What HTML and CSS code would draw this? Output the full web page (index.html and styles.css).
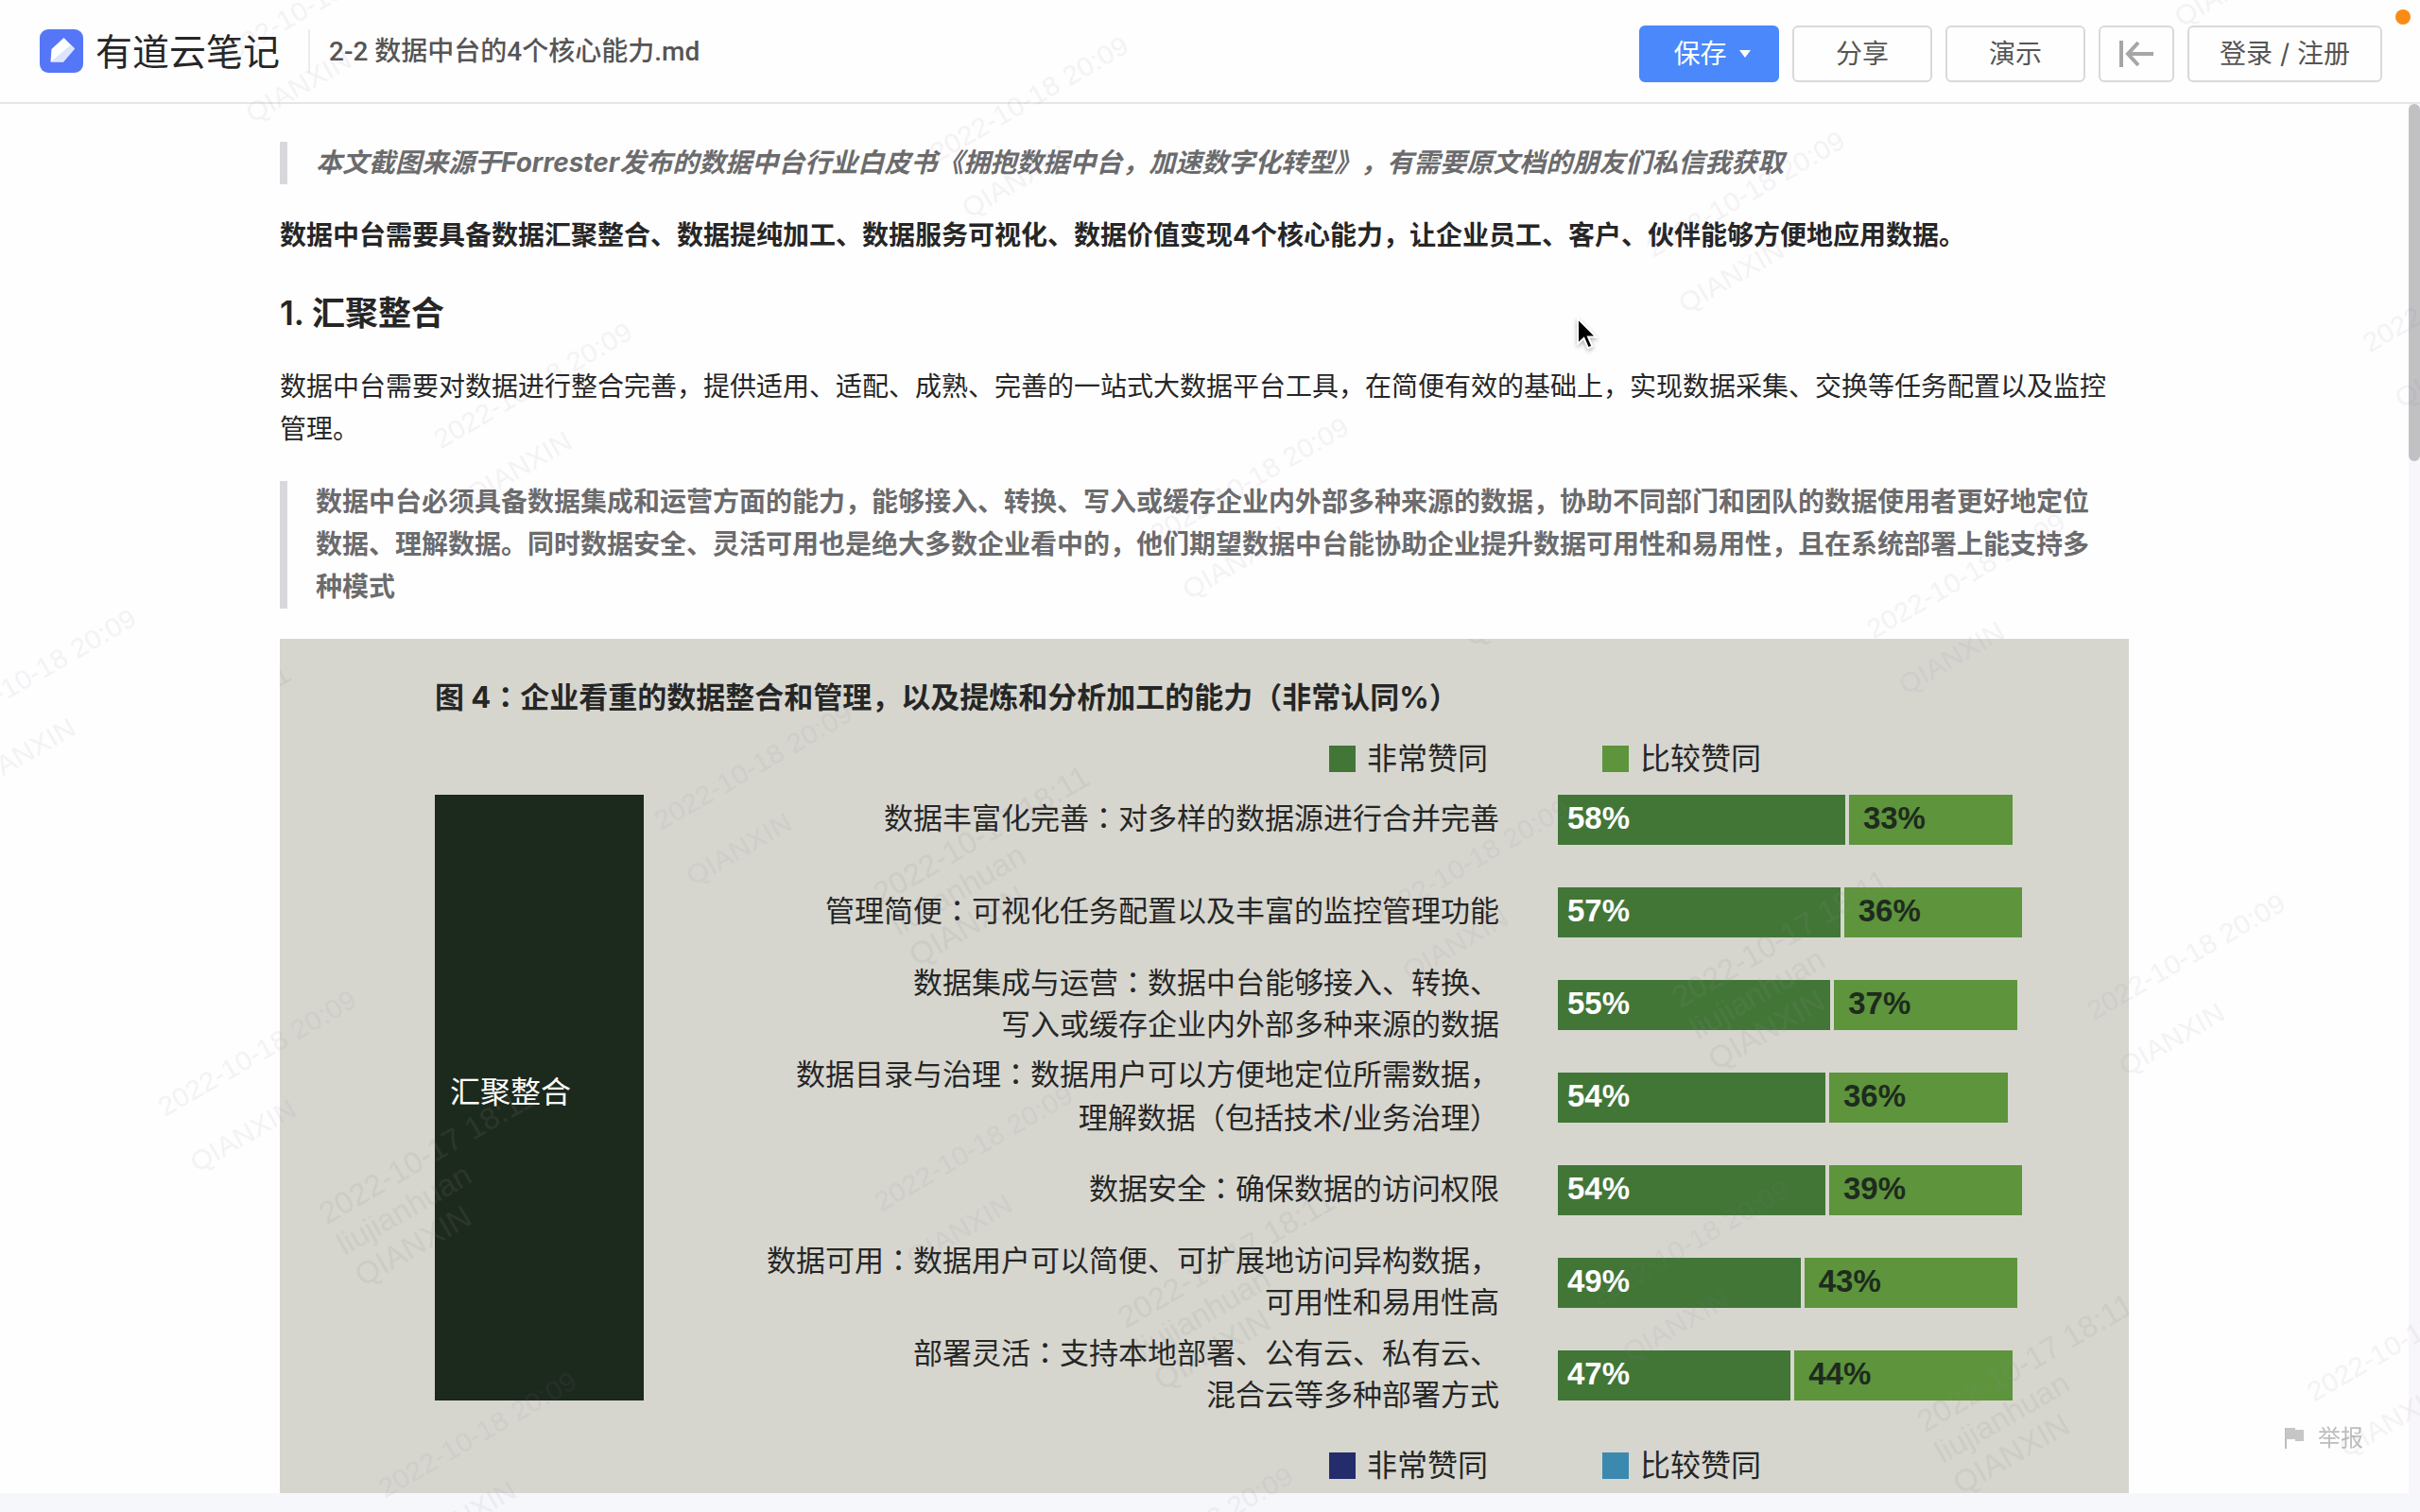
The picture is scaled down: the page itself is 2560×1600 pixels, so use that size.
FILE: index.html
```html
<!DOCTYPE html>
<html lang="zh-CN">
<head>
<meta charset="utf-8">
<title>2-2 数据中台的4个核心能力.md</title>
<link rel="stylesheet" href="styles.css">
</head>
<body>
<div class="app">
  <header class="topbar">
    <a class="brand" href="#">
      <svg class="brand-logo" viewBox="0 0 46 46" aria-hidden="true">
        <rect width="46" height="46" rx="9" fill="#5577f7"/>
        <path d="M25.500 9L37 20.500L25 34.500H11.500L12.500 21Z" fill="#fff"/>
        <path d="M33 16.500L37 20.500L25 34.500H11.500Z" fill="#dde4fd"/>
      </svg>
      <span>有道云笔记</span>
    </a>
    <h1 class="file-name">2-2 数据中台的4个核心能力.md</h1>
    <nav class="actions">
      <button class="btn btn-primary" type="button">保存 <svg class="caret" viewBox="0 0 12 8" aria-hidden="true"><path d="M0 0H12L6 8Z" fill="#fff"/></svg></button>
      <button class="btn" type="button">分享</button>
      <button class="btn" type="button">演示</button>
      <button class="btn btn-icon" type="button" aria-label="收起"><svg viewBox="0 0 38 30" aria-hidden="true"><path d="M3 1V29M37 15H10M21 3L10 15L21 27" fill="none" stroke="#a6a6a6" stroke-width="4"/></svg></button>
      <button class="btn btn-login" type="button">登录 / 注册</button>
    </nav>
  </header>

  <div class="viewport">
    <main class="doc">
      <blockquote><em>本文截图来源于Forrester发布的数据中台行业白皮书《拥抱数据中台，加速数字化转型》，有需要原文档的朋友们私信我获取</em></blockquote>
      <p><strong>数据中台需要具备数据汇聚整合、数据提纯加工、数据服务可视化、数据价值变现4个核心能力，让企业员工、客户、伙伴能够方便地应用数据。</strong></p>
      <h2>1. 汇聚整合</h2>
      <p>数据中台需要对数据进行整合完善，提供适用、适配、成熟、完善的一站式大数据平台工具，在简便有效的基础上，实现数据采集、交换等任务配置以及监控管理。</p>
      <blockquote>数据中台必须具备数据集成和运营方面的能力，能够接入、转换、写入或缓存企业内外部多种来源的数据，协助不同部门和团队的数据使用者更好地定位数据、理解数据。同时数据安全、灵活可用也是绝大多数企业看中的，他们期望数据中台能协助企业提升数据可用性和易用性，且在系统部署上能支持多种模式</blockquote>

      <figure class="chart">
        <figcaption>图 4<span class="mid" lang="zh-TW">：</span>企业看重的数据整合和管理，以及提炼和分析加工的能力<span class="mid" lang="zh-TW">（</span>非常认同%<span class="mid" lang="zh-TW">）</span></figcaption>
        <ul class="legend">
          <li><i class="swatch deep-green"></i>非常赞同</li>
          <li><i class="swatch light-green"></i>比较赞同</li>
        </ul>
        <div class="group">
          <div class="group-name">汇聚整合</div>
          <div class="rows">
            <div class="label">数据丰富化完善<span class="mid" lang="zh-TW">：</span>对多样的数据源进行合并完善</div>
            <div class="bars"><span class="bar deep-green" style="width:58%">58%</span><span class="bar light-green" style="width:33%">33%</span></div>
            <div class="label">管理简便<span class="mid" lang="zh-TW">：</span>可视化任务配置以及丰富的监控管理功能</div>
            <div class="bars"><span class="bar deep-green" style="width:57%">57%</span><span class="bar light-green" style="width:36%">36%</span></div>
            <div class="label">数据集成与运营<span class="mid" lang="zh-TW">：</span>数据中台能够接入、转换、<br>写入或缓存企业内外部多种来源的数据</div>
            <div class="bars"><span class="bar deep-green" style="width:55%">55%</span><span class="bar light-green" style="width:37%">37%</span></div>
            <div class="label">数据目录与治理<span class="mid" lang="zh-TW">：</span>数据用户可以方便地定位所需数据，<br>理解数据<span class="mid" lang="zh-TW">（</span>包括技术/业务治理<span class="mid" lang="zh-TW">）</span></div>
            <div class="bars"><span class="bar deep-green" style="width:54%">54%</span><span class="bar light-green" style="width:36%">36%</span></div>
            <div class="label">数据安全<span class="mid" lang="zh-TW">：</span>确保数据的访问权限</div>
            <div class="bars"><span class="bar deep-green" style="width:54%">54%</span><span class="bar light-green" style="width:39%">39%</span></div>
            <div class="label">数据可用<span class="mid" lang="zh-TW">：</span>数据用户可以简便、可扩展地访问异构数据，<br>可用性和易用性高</div>
            <div class="bars"><span class="bar deep-green" style="width:49%">49%</span><span class="bar light-green" style="width:43%">43%</span></div>
            <div class="label">部署灵活<span class="mid" lang="zh-TW">：</span>支持本地部署、公有云、私有云、<br>混合云等多种部署方式</div>
            <div class="bars"><span class="bar deep-green" style="width:47%">47%</span><span class="bar light-green" style="width:44%">44%</span></div>
          </div>
        </div>
        <ul class="legend">
          <li><i class="swatch navy"></i>非常赞同</li>
          <li><i class="swatch sky"></i>比较赞同</li>
        </ul>
        <svg class="watermark" aria-hidden="true">
          <defs>
            <pattern id="wm-chart" width="677" height="518" patternUnits="userSpaceOnUse" patternTransform="rotate(-30)">
              <g font-size="33" fill="#8c8888" fill-opacity=".14">
                <text x="410" y="44">2022-10-17 18:11</text>
                <text x="410" y="82">liujianhuan</text>
                <text x="410" y="120">QIANXIN</text>
              </g>
            </pattern>
          </defs>
          <rect width="100%" height="100%" fill="url(#wm-chart)"/>
        </svg>
      </figure>
    </main>
    <div class="scroll-track"><div class="scroll-thumb"></div></div>
  </div>
  <footer class="bottom-strip"></footer>
</div>

<a class="report" href="#">
  <svg viewBox="0 0 21 22" aria-hidden="true"><path d="M1 0V22" stroke="#bdbdbd" stroke-width="2"/><path d="M1 0H11V2H20V14H11V12H1Z" fill="#c6c6c6"/></svg>
  举报
</a>
<svg class="watermark" aria-hidden="true">
  <defs>
    <pattern id="wm-page" width="606" height="466" patternUnits="userSpaceOnUse" patternTransform="rotate(-30)">
      <g font-size="30" fill="#8c6f96" fill-opacity=".09">
        <text x="166" y="179">2022-10-18 20:09</text>
        <text x="166" y="247">QIANXIN</text>
      </g>
    </pattern>
  </defs>
  <rect width="100%" height="100%" fill="url(#wm-page)"/>
</svg>
<span class="rec-dot"></span>
<svg class="cursor" viewBox="0 0 24 36" aria-hidden="true"><path d="M2 2V29L8.500 23L13 33.500L17.500 31.500L13 21.500H21.500Z" fill="#000" stroke="#fff" stroke-width="2"/></svg>
</body>
</html>
```

FILE: styles.css
```css
* {
  box-sizing: border-box;
}

body {
  margin: 0;
  background: #fefefe;
  color: #262626;
  font: 28px/45px Inter, "Noto Sans CJK SC", sans-serif;
  text-spacing-trim: space-all;
}

.app {
  display: flex;
  flex-direction: column;
  height: 100vh;
  overflow: hidden;
}

.topbar {
  display: flex;
  align-items: center;
  flex: none;
  height: 110px;
  padding: 0 40px 0 42px;
  border-bottom: 2px solid #e6e6e8;
}

.brand {
  display: flex;
  align-items: center;
  gap: 13px;
  padding-right: 30px;
  color: #262626;
  font-size: 39px;
  text-decoration: none;
  border-right: 2px solid #ececee;
}

.brand-logo {
  width: 46px;
  height: 46px;
}

.file-name {
  margin: 0 0 0 20px;
  color: #555;
  font-family: Roboto, "Noto Sans CJK SC", sans-serif;
  font-size: 28px;
  font-weight: 500;
}

.actions {
  display: flex;
  gap: 14px;
  margin: 6px 0 0 auto;
}

.btn {
  display: flex;
  align-items: center;
  justify-content: center;
  width: 148px;
  height: 60px;
  padding: 0;
  color: #555;
  font: inherit;
  background: #fefefe;
  border: 2px solid #d9d9dc;
  border-radius: 6px;
}

.btn-primary {
  gap: 13px;
  padding-left: 6px;
  color: #fff;
  background: #4a88fb;
  border-color: #4a88fb;
}

.caret {
  width: 12px;
  height: 8px;
}

.btn-icon {
  width: 80px;
}

.btn-icon svg {
  width: 38px;
  height: 30px;
}

.btn-login {
  width: 206px;
}

.viewport {
  display: flex;
  flex: 1;
  min-height: 0;
}

.doc {
  flex: 1;
  min-width: 0;
  padding: 40px 296px 0;
  overflow: hidden;
}

.doc p,
.doc blockquote {
  margin: 0 0 32px;
}

.doc blockquote {
  padding: 0 30px;
  color: #6b6b6d;
  font-weight: 600;
  border-left: 8px solid #d8d8dc;
}

.doc blockquote em {
  font-weight: 700;
}

.doc h2 {
  margin: 0 0 28px;
  font-size: 35px;
  font-weight: 600;
  line-height: 55px;
}

.chart {
  position: relative;
  margin: 0;
  padding: 38px 80px 120px 164px;
  overflow: hidden;
  background: #d6d6cf;
  font-size: 31px;
  line-height: 44px;
}

.chart figcaption {
  font-weight: 700;
}

.mid {
  font-family: "Noto Sans CJK TC", sans-serif;
}

.legend {
  display: flex;
  justify-content: flex-end;
  gap: 121px;
  margin: 21px 0 16px;
  padding: 0 309px 0 0;
  font-size: 32px;
  list-style: none;
}

.legend li {
  display: flex;
  align-items: center;
  gap: 12px;
}

.swatch {
  width: 28px;
  height: 28px;
}

.deep-green {
  background: #427637;
}

.light-green {
  background: #5d943c;
}

.navy {
  background: #242c6c;
}

.sky {
  background: #3b89af;
}

.group {
  display: flex;
  margin-bottom: 47px;
}

.group-name {
  display: flex;
  align-items: center;
  width: 221px;
  padding: 0 0 12px 16px;
  color: #fff;
  font-size: 32px;
  background: #1c291d;
}

.rows {
  display: grid;
  flex: 1;
  grid-template-columns: 1fr 524px;
  grid-auto-rows: 53px;
  gap: 45px 62px;
  align-items: center;
}

.label {
  padding-bottom: 6px;
  text-align: right;
  white-space: nowrap;
}

.bars {
  display: flex;
  gap: 4px;
}

.bar {
  flex: none;
  height: 53px;
  padding-left: 10px;
  color: #fff;
  font: 700 33px/50px "Liberation Sans", sans-serif;
}

.bar.light-green {
  padding-left: 15px;
  color: #1e2b1e;
}

.scroll-track {
  flex: none;
  width: 12px;
  background: #f8f6fa;
}

.scroll-thumb {
  height: 378px;
  background: #c1c0c3;
  border-radius: 6px;
}

.bottom-strip {
  flex: none;
  height: 20px;
  background: #f5f7fb;
}

.report {
  position: fixed;
  right: 60px;
  bottom: 58px;
  display: flex;
  align-items: center;
  gap: 14px;
  color: #bdbdbd;
  font-size: 24px;
  line-height: 40px;
  text-decoration: none;
}

.report svg {
  width: 21px;
  height: 22px;
}

.watermark {
  position: absolute;
  inset: 0;
  width: 100%;
  height: 100%;
  font-family: "Liberation Sans", sans-serif;
  pointer-events: none;
}

.rec-dot {
  position: fixed;
  top: 10px;
  right: 10px;
  width: 16px;
  height: 16px;
  background: #f98c14;
  border-radius: 50%;
}

.cursor {
  position: fixed;
  top: 335px;
  left: 1667px;
  width: 24px;
  height: 36px;
  filter: drop-shadow(0 2px 2px rgba(0, 0, 0, .3));
}
```
